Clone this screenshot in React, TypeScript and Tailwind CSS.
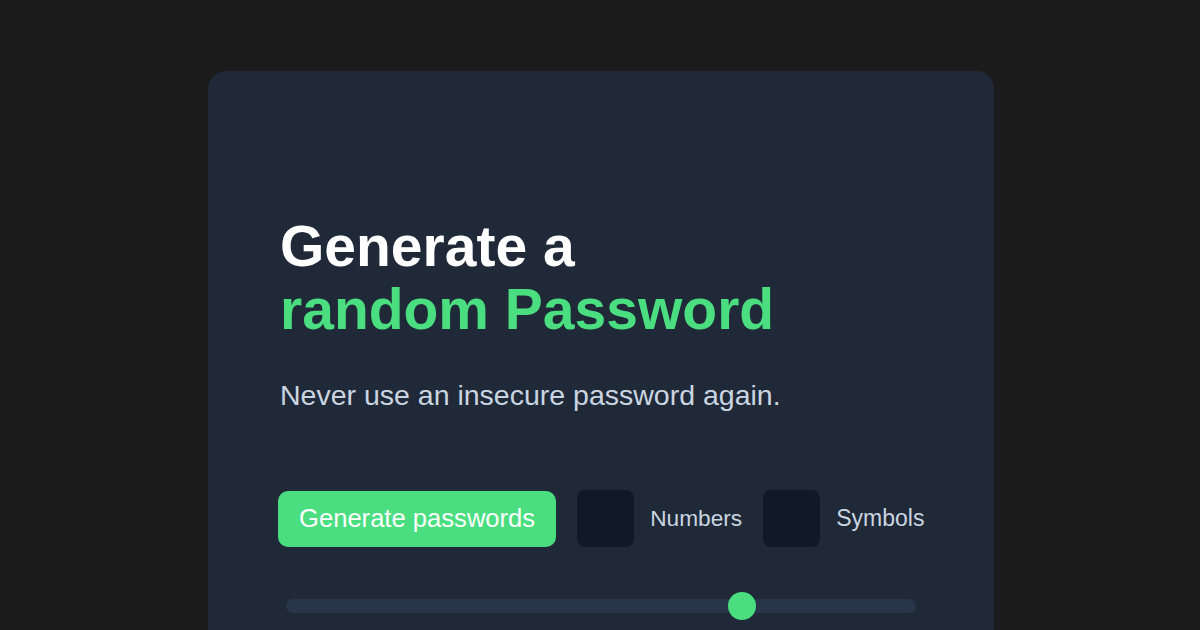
import React from 'react';

export default function App() {
  return (
    <div
      className="w-[1200px] h-[630px] overflow-hidden bg-[#1b1b1b] pt-[71px]"
      style={{ fontFamily: '"Liberation Sans", Arial, sans-serif' }}
    >
      <div className="ml-[208px] w-[786px] h-[700px] rounded-[18px] bg-[#1f2937] pl-[72px] pr-[40px] pt-[144px]">
        {/* Heading */}
        <h1 className="text-[57px] leading-[63px] font-bold text-white">
          Generate a
          <br />
          <span className="text-[#4ade80]">random Password</span>
        </h1>
        <p className="mt-[38px] text-[28.5px] leading-[32px] text-[#cbd5e1]">
          Never use an insecure password again.
        </p>

        {/* Controls */}
        <div className="mt-[79px] -ml-[2px] flex items-center whitespace-nowrap">
          <button className="shrink-0 h-[56px] px-[21px] rounded-[10px] bg-[#4ade80] text-[25.6px] text-white">
            Generate passwords
          </button>
          <div className="shrink-0 ml-[21px] w-[57px] h-[57px] rounded-[8px] bg-[#111827]" />
          <span className="ml-[16px] text-[22.7px] text-[#cbd5e1]">Numbers</span>
          <div className="shrink-0 ml-[21px] w-[57px] h-[57px] rounded-[8px] bg-[#111827]" />
          <span className="ml-[16px] text-[23px] text-[#cbd5e1]">Symbols</span>
        </div>

        {/* Length slider */}
        <div className="mt-[45px] ml-[6px] w-[630px] relative h-[28px] flex items-center">
          <div className="w-full h-[14px] rounded-full bg-[#283548]" />
          <div className="absolute left-[442px] top-0 w-[28px] h-[28px] rounded-full bg-[#4ade80]" />
        </div>
      </div>
    </div>
  );
}
